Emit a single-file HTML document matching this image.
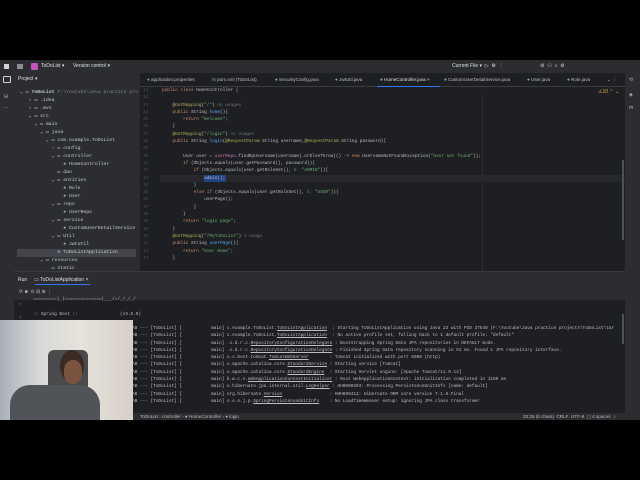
<!DOCTYPE html>
<html><head><style>
*{margin:0;padding:0;box-sizing:border-box}
body{width:640px;height:480px;background:#000;position:relative;overflow:hidden;font-family:"Liberation Sans",sans-serif;color:#bcbec4}
.a{position:absolute;white-space:pre}
.m{font-family:"Liberation Mono",monospace;font-size:4.4px;line-height:7.3px;overflow:hidden}
.s{font-size:5px}
.t{position:absolute;top:77px;font-size:4.6px;white-space:pre}
</style></head><body>
<div class="a" style="left:0;top:60px;width:640px;height:360px;background:#1e1f22"></div>
<div class="a" style="left:0;top:60px;width:640px;height:13px;background:#2b2d30"></div>
<div class="a" style="left:4px;top:64px;width:5px;height:5px;background:#cfd1d6"></div>
<div class="a" style="left:17px;top:64px;width:6px;height:5px;background:#8a8c90"></div>
<div class="a" style="left:31px;top:63px;width:7px;height:7px;background:#c94fbd;border-radius:1px"></div>
<div class="a s" style="left:41px;top:63px;color:#dfe1e5">ToDoList ▾</div>
<div class="a s" style="left:73px;top:63px;color:#dfe1e5">Version control ▾</div>
<div class="a s" style="left:452px;top:63px;color:#dfe1e5">Current File ▾ &nbsp;▷ &nbsp;⚙ &nbsp;⋮</div>
<div class="a s" style="left:540px;top:63px;color:#cfd1d6">⚙ &nbsp;⚇ &nbsp;⌕ &nbsp;⚙</div>
<div class="a" style="left:0;top:73px;width:14px;height:340px;background:#2b2d30"></div>
<div class="a" style="left:3px;top:76px;width:8px;height:7px;border:1px solid #cfd1d6;border-radius:1px"></div>
<div class="a s" style="left:4px;top:94px">⛁</div>
<div class="a s" style="left:3px;top:105px">···</div>
<div class="a" style="left:625px;top:73px;width:15px;height:340px;background:#2b2d30"></div>
<div class="a s" style="left:629px;top:77px">⟲</div>
<div class="a s" style="left:629px;top:92px">◈</div>
<div class="a s" style="left:629px;top:105px">m</div>
<div class="a" style="left:14px;top:73px;width:126px;height:198px;background:#2b2d30"></div>
<div class="a s" style="left:18px;top:76px;color:#dfe1e5">Project ▾</div>
<div class="a" style="left:17px;top:249px;width:119px;height:8px;background:#43454a"></div>
<div class="a m" style="left:20px;top:89px;width:118px;height:182px;font-size:4.8px;line-height:8px;color:#c9ccd1">⌄ ▭ <b>ToDoList</b> <span style="color:#7f8288">F:\Youtube\Java practice projects\ToDoList</span>
   › ▭ .idea
   › ▭ .mvn
   ⌄ ▭ src
     ⌄ ▭ main
       ⌄ ▭ java
         ⌄ ▭ com.example.ToDoList
           › ▭ config
           ⌄ ▭ controller
               <span style="color:#8fa8e8">●</span> HomeController
             ▭ dao
           ⌄ ▭ entities
               <span style="color:#8fa8e8">●</span> Role
               <span style="color:#8fa8e8">●</span> User
           ⌄ ▭ repo
               <span style="color:#6fbf73">●</span> UserRepo
           ⌄ ▭ service
               <span style="color:#8fa8e8">●</span> CustomUserDetailService
           ⌄ ▭ Util
               <span style="color:#8fa8e8">●</span> JwtUtil
             <span style="color:#8fa8e8">●</span> ToDoListApplication
       ⌄ ▭ resources
           ▭ static</div>
<div class="a" style="left:140px;top:73px;width:485px;height:14px;background:#1e1f22;border-bottom:1px solid #393b40"></div>
<div class="t" style="left:147px"><span style="color:#6fbf73">●</span> application.properties</div>
<div class="t" style="left:212px"><span style="color:#8fa8e8">m</span> pom.xml (ToDoList)</div>
<div class="t" style="left:275px"><span style="color:#8fa8e8">●</span> SecurityConfig.java</div>
<div class="t" style="left:335px"><span style="color:#8fa8e8">●</span> JwtUtil.java</div>
<div class="t" style="left:380px;color:#dfe1e5"><span style="color:#8fa8e8">●</span> HomeController.java ×</div>
<div class="t" style="left:444px"><span style="color:#8fa8e8">●</span> CustomUserDetailService.java</div>
<div class="t" style="left:527px"><span style="color:#8fa8e8">●</span> User.java</div>
<div class="t" style="left:567px"><span style="color:#8fa8e8">●</span> Role.java</div>
<div class="t" style="left:607px">⌄ ⋮</div>
<div class="a" style="left:377px;top:86px;width:63px;height:1px;background:#3574f0"></div>
<div class="a s" style="left:598px;top:89px;color:#e0b050">⚠10 ⌃ ⌄</div>
<div class="a" style="left:482px;top:95px;width:1px;height:176px;background:#2b2d30"></div>
<div class="a" style="left:160px;top:175px;width:465px;height:7px;background:#26282c"></div>
<div class="a" style="left:204px;top:175px;width:22px;height:7px;background:#214283"></div>
<div class="a" style="left:622px;top:160px;width:2px;height:80px;background:#4e5157"></div>
<div class="a m" style="left:143px;top:87px;color:#4b5059">14
22
23
24
25
26
27
28
29
30
31
32
33
34
35
36
37
38
39
40
41
42
43
44</div>
<div class="a m" style="left:162px;top:87px;width:458px;height:184px;color:#bcbec4"><span style="color:#cf8e6d">public class</span> HomeController {

    <span style="color:#b3ae60">@GetMapping</span>(<span style="color:#6aab73">"/"</span>) <span style="color:#6f737a">no usages</span>
    <span style="color:#cf8e6d">public</span> String <span style="color:#56a8f5">home</span>(){
        <span style="color:#cf8e6d">return</span> <span style="color:#6aab73">"Welcome"</span>;
    }
    <span style="color:#b3ae60">@GetMapping</span>(<span style="color:#6aab73">"/login"</span>) <span style="color:#6f737a">no usages</span>
    <span style="color:#cf8e6d">public</span> String <span style="color:#56a8f5">login</span>(<span style="color:#b3ae60">@RequestParam</span> String username,<span style="color:#b3ae60">@RequestParam</span> String password){

        User user = <span style="color:#c77dbb">userRepo</span>.findByUsername(username).orElseThrow(() -> <span style="color:#cf8e6d">new</span> UsernameNotFoundException(<span style="color:#6aab73">"User not found"</span>));
        <span style="color:#cf8e6d">if</span> (Objects.<i>equals</i>(user.getPassword(), password)){
            <span style="color:#cf8e6d">if</span> (Objects.<i>equals</i>(user.getRoleSet(), <span style="color:#6f737a">b:</span> <span style="color:#6aab73">"ADMIN"</span>)){
                admin();
            }
            <span style="color:#cf8e6d">else if</span> (Objects.<i>equals</i>(user.getRoleSet(), <span style="color:#6f737a">b:</span> <span style="color:#6aab73">"USER"</span>)){
                userPage();
            }
        }
        <span style="color:#cf8e6d">return</span> <span style="color:#6aab73">"login page"</span>;
    }
    <span style="color:#b3ae60">@GetMapping</span>(<span style="color:#6aab73">"/MyToDoList"</span>) <span style="color:#6f737a">1 usage</span>
    <span style="color:#cf8e6d">public</span> String <span style="color:#56a8f5">userPage</span>(){
        <span style="color:#cf8e6d">return</span> <span style="color:#6aab73">"User Home"</span>;
    }</div>
<div class="a" style="left:14px;top:271px;width:611px;height:1px;background:#393b40"></div>
<div class="a" style="left:14px;top:272px;width:611px;height:28px;background:#2b2d30"></div>
<div class="a s" style="left:18px;top:277px;color:#dfe1e5">Run &nbsp;&nbsp;&nbsp;&nbsp;▭ ToDoListApplication ×</div>
<div class="a" style="left:35px;top:284px;width:55px;height:1px;background:#3574f0"></div>
<div class="a s" style="left:19px;top:289px">⟳ ■ &nbsp;⊙ ⊟ ⊕ ⋮</div>
<div class="a s" style="left:19px;top:302px">↑<br><br>↓</div>
<div class="a" style="left:28px;top:300px;width:597px;height:113px;background:#1e1f22"></div>
<div class="a" style="left:622px;top:314px;width:2px;height:30px;background:#4e5157"></div>
<div class="a m" style="left:33px;top:296px;color:#bcbec4">=========|_|==============|___/=/_/_/_/

:: Spring Boot ::                (v3.5.0)</div>
<div class="a m" style="left:132px;top:325px;width:490px;height:88px;color:#bcbec4">AB --- [ToDoList] [           main] c.example.ToDoList.<u>ToDoListApplication</u>  : Starting ToDoListApplication using Java 23 with PID 37548 (F:\Youtube\Java practice projects\ToDoList\tar
AB --- [ToDoList] [           main] c.example.ToDoList.<u>ToDoListApplication</u>  : No active profile set, falling back to 1 default profile: "default"
AB --- [ToDoList] [           main] .s.d.r.c.<u>RepositoryConfigurationDelegate</u> : Bootstrapping Spring Data JPA repositories in DEFAULT mode.
AB --- [ToDoList] [           main] .s.d.r.c.<u>RepositoryConfigurationDelegate</u> : Finished Spring Data repository scanning in 51 ms. Found 1 JPA repository interface.
AB --- [ToDoList] [           main] o.s.boot.tomcat.<u>TomcatWebServer</u>        : Tomcat initialized with port 8080 (http)
AB --- [ToDoList] [           main] o.apache.catalina.core.<u>StandardService</u> : Starting service [Tomcat]
AB --- [ToDoList] [           main] o.apache.catalina.core.<u>StandardEngine</u>  : Starting Servlet engine: [Apache Tomcat/11.0.14]
AB --- [ToDoList] [           main] b.w.c.s.<u>WebApplicationContextInitializer</u> : Root WebApplicationContext: initialization completed in 1160 ms
AB --- [ToDoList] [           main] o.hibernate.jpa.internal.util.<u>LogHelper</u> : HHH000204: Processing PersistenceUnitInfo [name: default]
AB --- [ToDoList] [           main] org.hibernate.<u>Version</u>                  : HHH000412: Hibernate ORM core version 7.1.8.Final
AB --- [ToDoList] [           main] o.s.o.j.p.<u>SpringPersistenceUnitInfo</u>    : No LoadTimeWeaver setup: ignoring JPA class transformer</div>
<div class="a" style="left:0;top:413px;width:640px;height:7px;background:#2b2d30"></div>
<div class="a" style="left:140px;top:413px;line-height:7px;font-size:4.6px">ToDoList › controller › ● HomeController › ● login</div>
<div class="a" style="left:523px;top:413px;line-height:7px;font-size:4.6px">33:26 (6 chars) &nbsp;CRLF &nbsp;UTF-8 &nbsp;▢ 4 spaces &nbsp;⌂</div>
<div class="a" style="left:0;top:320px;width:133px;height:100px;background:linear-gradient(90deg,#a8b0b8 0%,#d8d8d6 30%,#e6e2dc 60%,#d6d0c8 100%)"></div>
<div class="a" style="left:48px;top:350px;width:40px;height:70px;background:#4a4a4c;border-radius:6px 6px 0 0"></div>
<div class="a" style="left:60px;top:350px;width:24px;height:32px;background:#3b2a22;border-radius:50%"></div>
<div class="a" style="left:10px;top:385px;width:90px;height:35px;background:#505358;border-radius:20px 20px 0 0"></div>
<div class="a" style="left:64px;top:360px;width:18px;height:24px;background:#7a5440;border-radius:45%"></div>
</body></html>
